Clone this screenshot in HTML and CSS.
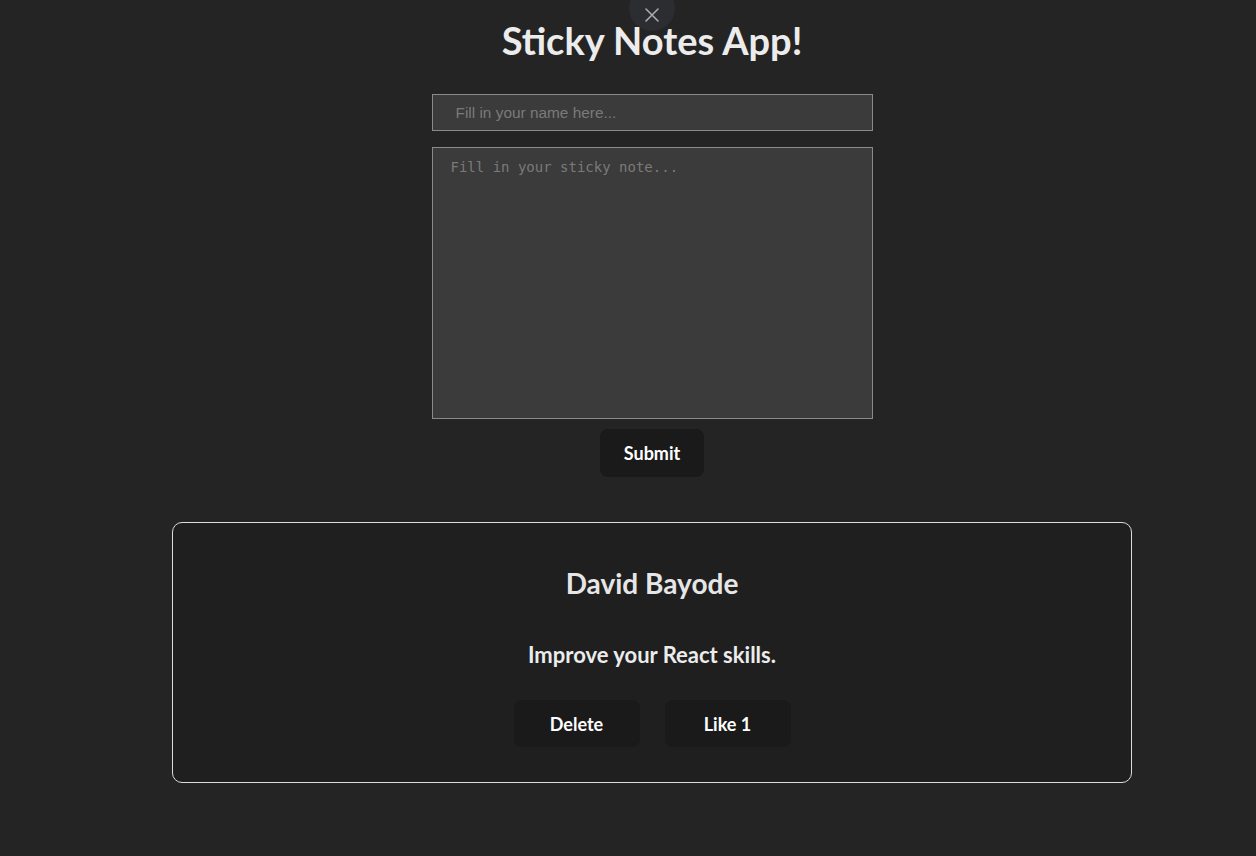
FILE: index.html
```html
<!DOCTYPE html>
<html lang="en">
<head>
<meta charset="utf-8">
<title>Sticky Notes App</title>
<link rel="stylesheet" href="styles.css">
</head>
<body>
<div class="close-btn" aria-label="close">
  <svg width="16" height="16" viewBox="0 0 16 16"><path d="M2 2 L14 14 M14 2 L2 14" stroke="#a9abb0" stroke-width="1.6" fill="none" stroke-linecap="round"/></svg>
</div>
<main class="app">
  <h1 class="title">Sticky Notes App!</h1>
  <form class="note-form">
    <input class="name-input" type="text" placeholder="Fill in your name here...">
    <textarea class="note-input" placeholder="Fill in your sticky note..."></textarea>
    <button class="btn submit-btn" type="button">Submit</button>
  </form>
  <section class="note-card">
    <h2 class="note-name">David Bayode</h2>
    <p class="note-text">Improve your React skills.</p>
    <div class="note-actions">
      <button class="btn action-btn" type="button">Delete</button>
      <button class="btn action-btn" type="button">Like 1</button>
    </div>
  </section>
</main>
</body>
</html>
```

FILE: styles.css
```css
html, body {
  margin: 0;
  padding: 0;
}
body {
  background: #242424;
  color: rgba(255, 255, 255, 0.87);
  font-family: Lato, "Noto Sans", sans-serif;
  min-height: 856px;
}
.close-btn {
  position: absolute;
  left: 629px;
  top: -15px;
  width: 46px;
  height: 46px;
  border-radius: 50%;
  background: #2c2d30;
  display: flex;
  align-items: flex-end;
  justify-content: center;
  box-sizing: border-box;
  z-index: 0;
}
.close-btn svg {
  margin-bottom: 8px;
}
.app {
  position: relative;
  z-index: 1;
  display: flex;
  flex-direction: column;
  align-items: center;
  padding-top: 18px;
  padding-left: 48px;
}
.title {
  margin: 0;
  font-size: 38px;
  font-weight: 700;
  line-height: 44px;
  color: #ececec;
}
.note-form {
  display: flex;
  flex-direction: column;
  align-items: center;
  margin-top: 32px;
}
.name-input {
  width: 441px;
  height: 37px;
  box-sizing: border-box;
  background: #3b3b3b;
  border: 1px solid #8a8a8a;
  padding: 0 23px;
  font-family: "Liberation Sans", Arial, sans-serif;
  font-size: 15.4px;
  color: #ddd;
  outline: none;
}
.name-input::placeholder { color: #7a7a7a; }
.note-input {
  margin-top: 16px;
  width: 441px;
  height: 272px;
  box-sizing: border-box;
  background: #3b3b3b;
  border: 1px solid #8a8a8a;
  padding: 11px 18px;
  font-family: "DejaVu Sans Mono", "Liberation Mono", monospace;
  font-size: 14px;
  color: #ddd;
  resize: none;
  outline: none;
  display: block;
}
.note-input::placeholder { color: #7a7a7a; }
.btn {
  background: #1a1a1a;
  border: none;
  border-radius: 8px;
  color: #fff;
  font-family: Lato, "Noto Sans", sans-serif;
  font-weight: 700;
  font-size: 18px;
  cursor: pointer;
}
.submit-btn {
  margin-top: 10px;
  width: 104px;
  height: 48px;
}
.note-card {
  margin-top: 45px;
  width: 960px;
  height: 261px;
  box-sizing: border-box;
  background: #1f1f1f;
  border: 1px solid #dcdcdc;
  border-radius: 10px;
  display: flex;
  flex-direction: column;
  align-items: center;
  padding-top: 43px;
}
.note-name {
  margin: 0;
  font-size: 28px;
  font-weight: 700;
  line-height: 34px;
  color: #e6e6e6;
}
.note-text {
  margin: 42px 0 0;
  font-size: 22px;
  font-weight: 700;
  line-height: 26px;
  color: #ececec;
}
.note-actions {
  margin-top: 32px;
  display: flex;
  gap: 25px;
}
.action-btn {
  width: 126px;
  height: 47px;
}
```
